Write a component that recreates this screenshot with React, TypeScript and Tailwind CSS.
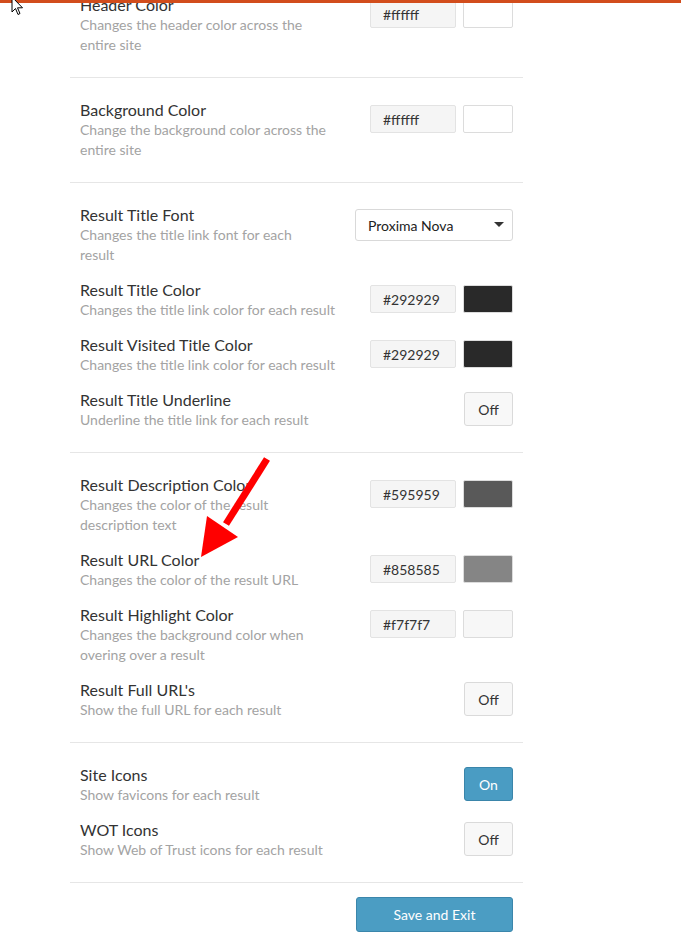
import React from "react";

type Ctl =
  | { kind: "color"; value: string; swatch: string }
  | { kind: "select"; value: string }
  | { kind: "toggle"; on: boolean };

type Row = { title: string; desc: string[]; ctl: Ctl };

const sections: Row[][] = [
  [
    { title: "Header Color", desc: ["Changes the header color across the", "entire site"], ctl: { kind: "color", value: "#ffffff", swatch: "#ffffff" } },
  ],
  [
    { title: "Background Color", desc: ["Change the background color across the", "entire site"], ctl: { kind: "color", value: "#ffffff", swatch: "#ffffff" } },
  ],
  [
    { title: "Result Title Font", desc: ["Changes the title link font for each", "result"], ctl: { kind: "select", value: "Proxima Nova" } },
    { title: "Result Title Color", desc: ["Changes the title link color for each result"], ctl: { kind: "color", value: "#292929", swatch: "#292929" } },
    { title: "Result Visited Title Color", desc: ["Changes the title link color for each result"], ctl: { kind: "color", value: "#292929", swatch: "#292929" } },
    { title: "Result Title Underline", desc: ["Underline the title link for each result"], ctl: { kind: "toggle", on: false } },
  ],
  [
    { title: "Result Description Color", desc: ["Changes the color of the result", "description text"], ctl: { kind: "color", value: "#595959", swatch: "#595959" } },
    { title: "Result URL Color", desc: ["Changes the color of the result URL"], ctl: { kind: "color", value: "#858585", swatch: "#858585" } },
    { title: "Result Highlight Color", desc: ["Changes the background color when", "overing over a result"], ctl: { kind: "color", value: "#f7f7f7", swatch: "#f7f7f7" } },
    { title: "Result Full URL's", desc: ["Show the full URL for each result"], ctl: { kind: "toggle", on: false } },
  ],
  [
    { title: "Site Icons", desc: ["Show favicons for each result"], ctl: { kind: "toggle", on: true } },
    { title: "WOT Icons", desc: ["Show Web of Trust icons for each result"], ctl: { kind: "toggle", on: false } },
  ],
];

function Control({ ctl }: { ctl: Ctl }) {
  if (ctl.kind === "color") {
    return (
      <div className="mt-[5px] flex gap-[7px]">
        <div className="flex h-[28px] w-[86px] items-center rounded-[2px] border border-[#e3e3e3] bg-[#f5f5f5] pl-[12px] text-[14px] text-[#333]">
          {ctl.value}
        </div>
        <div
          className="h-[28px] w-[50px] rounded-[2px] border border-[#dcdcdc]"
          style={{ backgroundColor: ctl.swatch }}
        />
      </div>
    );
  }
  if (ctl.kind === "select") {
    return (
      <div className="mt-[4px] flex h-[32px] w-[158px] items-center justify-between rounded-[3px] border border-[#d9d9d9] bg-white pl-[12px] pr-[8px] text-[14px] text-[#222]">
        <span>{ctl.value}</span>
        <svg width="10" height="6" viewBox="0 0 10 6">
          <path d="M0 0H10L5 5Z" fill="#333" />
        </svg>
      </div>
    );
  }
  return (
    <div
      className={
        ctl.on
          ? "mt-[2px] flex h-[34px] w-[49px] items-center justify-center rounded-[3px] border border-[#3a85aa] bg-[#4a9cc3] text-[14px] text-white"
          : "mt-[2px] flex h-[34px] w-[49px] items-center justify-center rounded-[3px] border border-[#dadada] bg-[#f8f8f8] text-[14px] text-[#333]"
      }
    >
      {ctl.on ? "On" : "Off"}
    </div>
  );
}

export default function App() {
  return (
    <div className="relative h-[948px] w-[681px] overflow-hidden bg-white font-['Lato',sans-serif]">
      <div className="-mt-[27px] ml-[70px] w-[453px]">
        {sections.map((rows, i) => (
          <div key={i} className="flex flex-col gap-[15px] border-b border-[#e6e6e6] px-[10px] py-[22px]">
            {rows.map((r) => (
              <div key={r.title} className="flex items-start justify-between">
                <div>
                  <div className="whitespace-nowrap text-[16px] leading-[20px] text-[#333]">{r.title}</div>
                  {r.desc.map((l) => (
                    <div key={l} className="whitespace-nowrap text-[14px] leading-[20px] text-[#a3a3a3]">
                      {l}
                    </div>
                  ))}
                </div>
                <Control ctl={r.ctl} />
              </div>
            ))}
          </div>
        ))}
        <div className="flex justify-end px-[10px] pt-[14px]">
          <button className="h-[35px] w-[157px] rounded-[3px] border border-[#3b86ab] bg-[#4b9dc3] text-[14px] text-white">
            Save and Exit
          </button>
        </div>
      </div>

      {/* top bar */}
      <div className="absolute left-0 top-0 h-[3px] w-[681px] bg-[#d24d1c]" />

      {/* mouse cursor */}
      <svg className="absolute left-[11px] top-[-4px]" width="14" height="20" viewBox="0 0 14 20">
        <path d="M1 1V16L4.5 12.5L7 18.5L9 17.5L6.5 11.8H11.5Z" fill="#fff" stroke="#000" strokeWidth="1" />
      </svg>

      {/* red arrow */}
      <svg className="absolute left-0 top-0" width="681" height="948" viewBox="0 0 681 948">
        <line x1="267" y1="459" x2="226" y2="524" stroke="#f00" strokeWidth="7" />
        <path d="M201 557L207 516L238 537Z" fill="#f00" />
      </svg>
    </div>
  );
}
